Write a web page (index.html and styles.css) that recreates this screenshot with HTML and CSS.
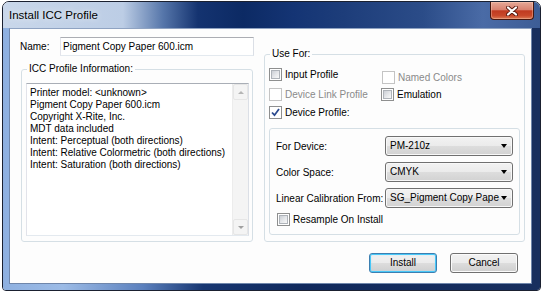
FILE: index.html
```html
<!DOCTYPE html>
<html>
<head>
<meta charset="utf-8">
<title>Install ICC Profile</title>
<link rel="stylesheet" href="styles.css">
</head>
<body>
<div class="window">
  <div class="titlebar">
    <span class="title">Install ICC Profile</span>
    <div class="close">
      <svg width="12" height="10" viewBox="0 0 12 10">
        <path d="M2 1.5 L10 8.5 M10 1.5 L2 8.5" stroke="#5a1a10" stroke-width="4" stroke-linecap="round"/>
        <path d="M2 1.5 L10 8.5 M10 1.5 L2 8.5" stroke="#ffffff" stroke-width="2.2" stroke-linecap="round"/>
      </svg>
    </div>
  </div>
  <div class="frame">
    <div class="client">
      <div class="main">
        <div class="col-left">
          <div class="name-row">
            <span class="name-label">Name:</span>
            <div class="textbox">Pigment Copy Paper 600.icm</div>
          </div>
          <fieldset class="group info-group">
            <legend>ICC Profile Information:</legend>
            <div class="listbox">
              <div class="list-text">
                <div>Printer model: &lt;unknown&gt;</div>
                <div>Pigment Copy Paper 600.icm</div>
                <div>Copyright X-Rite, Inc.</div>
                <div>MDT data included</div>
                <div>Intent: Perceptual (both directions)</div>
                <div>Intent: Relative Colormetric (both directions)</div>
                <div>Intent: Saturation (both directions)</div>
              </div>
              <div class="scrollbar">
                <div class="sb-btn"><span class="arrow-up"></span></div>
                <div class="sb-track"></div>
                <div class="sb-btn"><span class="arrow-down"></span></div>
              </div>
            </div>
          </fieldset>
        </div>
        <fieldset class="group use-group">
          <legend>Use For:</legend>
          <div class="cb-row row1">
            <div class="check col1"><span class="cb"></span><span>Input Profile</span></div>
            <div class="check col2 disabled shifted"><span class="cb"></span><span>Named Colors</span></div>
          </div>
          <div class="cb-row row2">
            <div class="check col1 disabled"><span class="cb"></span><span>Device Link Profile</span></div>
            <div class="check col2"><span class="cb"></span><span>Emulation</span></div>
          </div>
          <div class="cb-row row3">
            <div class="check col1"><span class="cb checked"><svg width="11" height="11" viewBox="0 0 11 11"><path d="M2 5.5 L4.5 8.2 L9 2" fill="none" stroke="#2b4a8f" stroke-width="1.8"/></svg></span><span>Device Profile:</span></div>
          </div>
          <div class="device-box">
            <div class="dev-row">
              <span class="dev-label">For Device:</span>
              <div class="combo"><span class="combo-text">PM-210z</span><span class="combo-arrow"></span></div>
            </div>
            <div class="dev-row">
              <span class="dev-label">Color Space:</span>
              <div class="combo"><span class="combo-text">CMYK</span><span class="combo-arrow"></span></div>
            </div>
            <div class="dev-row">
              <span class="dev-label">Linear Calibration From:</span>
              <div class="combo"><span class="combo-text">SG_Pigment Copy Pape</span><span class="combo-arrow"></span></div>
            </div>
            <div class="check resample"><span class="cb"></span><span>Resample On Install</span></div>
          </div>
        </fieldset>
      </div>
      <div class="buttons">
        <button class="btn default">Install</button>
        <button class="btn">Cancel</button>
      </div>
    </div>
  </div>
</div>
</body>
</html>
```

FILE: styles.css
```css
html, body {
  margin: 0;
  padding: 0;
}
body {
  background: #ffffff;
  font-family: "Liberation Sans", Arial, sans-serif;
  font-size: 10px;
  color: #000;
}
.window {
  margin: 1px 0 0 2px;
  width: 537px;
  height: 288px;
  border: 1px solid #1a2030;
  border-radius: 7px 7px 4px 4px;
  display: flex;
  flex-direction: column;
  overflow: hidden;
}
.titlebar {
  height: 26px;
  flex: none;
  display: flex;
  justify-content: space-between;
  align-items: flex-start;
  background: linear-gradient(90deg, #c9d7ea 0px, #bccde5 120px, #5676aa 160px, #143370 195px, #0c2a64 240px, #143474 290px, #1d3d7a 340px, #2b4c88 420px, #4a6ba6 480px, #3d5d96 537px);
}
.title {
  margin: 6px 0 0 6px;
  font-size: 11.5px;
  line-height: 14px;
  color: #000;
  text-shadow: 0 0 6px rgba(255,255,255,0.9);
}
.close {
  width: 42px;
  height: 17px;
  margin-right: 6px;
  border: 1px solid #47170f;
  border-top: none;
  border-radius: 0 0 4px 4px;
  background: linear-gradient(#e6a897 0%, #d98270 45%, #c03a20 52%, #c8482a 80%, #dc7a55 100%);
  box-shadow: inset 0 0 0 1px rgba(255,220,200,0.35);
  display: flex;
  align-items: center;
  justify-content: center;
}
.frame {
  flex: 1;
  display: flex;
  padding: 0 8px 6px 6px;
  background: linear-gradient(90deg, #8eb0e0 0px, #9cbbe6 60px, #5b80bd 140px, #173671 200px, #10295c 300px, #182f5e 537px);
}
.client {
  flex: 1;
  display: flex;
  flex-direction: column;
  background: #fdfdfd;
  border: 1px solid #6f86ab;
  border-top-color: #8fa3c2;
  padding: 8px 6px 10px 10px;
}
.main {
  flex: 1;
  display: flex;
  gap: 10px;
}
.col-left {
  width: 234px;
  display: flex;
  flex-direction: column;
}
.name-row {
  display: flex;
  align-items: center;
  height: 19px;
}
.name-label {
  width: 40px;
}
.textbox {
  box-sizing: border-box;
  width: 194px;
  height: 19px;
  border: 1px solid;
  border-color: #abadb3 #dbdfe6 #e3e9ef #e2e3ea;
  background: #fff;
  padding: 0 2px;
  line-height: 17px;
  white-space: nowrap;
}
.group {
  margin: 0;
  border: 1px solid #d5dfe5;
  border-radius: 3px;
  min-width: 0;
  display: flex;
  flex-direction: column;
}
.group legend {
  padding: 0 2px;
  margin-left: 1px;
  line-height: 12px;
  font-size: 10px;
}
.info-group {
  flex: 1;
  margin: 7px 1px 0 1px;
  padding: 8px 3px 5px 4px;
}
.listbox {
  flex: 1;
  display: flex;
  border: 1px solid;
  border-color: #a9aeb6 #dbdfe6 #e3e9ef #e2e3ea;
  background: #fff;
}
.list-text {
  flex: 1;
  padding: 3px 3px;
  line-height: 12px;
  white-space: nowrap;
}
.scrollbar {
  width: 15px;
  display: flex;
  flex-direction: column;
  background: #f4f4f4;
  border-left: 1px solid #ececec;
}
.sb-btn {
  height: 16px;
  display: flex;
  align-items: center;
  justify-content: center;
  border: 1px solid #e6e6e6;
  border-radius: 2px;
  box-sizing: border-box;
}
.sb-track {
  flex: 1;
}
.arrow-up {
  width: 0;
  height: 0;
  border-left: 3px solid transparent;
  border-right: 3px solid transparent;
  border-bottom: 3px solid #b5b5b5;
}
.arrow-down {
  width: 0;
  height: 0;
  border-left: 3px solid transparent;
  border-right: 3px solid transparent;
  border-top: 3px solid #a0a0a0;
}
.use-group {
  width: 261px;
  box-sizing: border-box;
  margin: 11px 0 0 0;
  padding: 0 4px 6px 4px;
}
.cb-row {
  display: flex;
  height: 13px;
  align-items: flex-start;
}
.row1 { margin-top: 8px; }
.row2 { margin-top: 7px; }
.row3 { margin-top: 5px; }
.check {
  display: flex;
  align-items: center;
  gap: 3px;
  height: 13px;
  white-space: nowrap;
}
.col1 {
  width: 112px;
}
.shifted {
  margin-top: 3px;
  margin-left: 1px;
}
.check.disabled {
  color: #8a8a8a;
}
.cb {
  box-sizing: border-box;
  width: 13px;
  height: 13px;
  flex: none;
  border: 1px solid #8e8f8f;
  background: #fff;
  padding: 1px;
  display: flex;
}
.cb::before {
  content: "";
  display: block;
  width: 9px;
  height: 9px;
  box-sizing: border-box;
  border: 1px solid #aeb3b9;
  background: linear-gradient(135deg, #cbcfd5 0%, #e6e8eb 55%, #f8f8f8 100%);
}
.cb.checked {
  padding: 0;
  align-items: center;
  justify-content: center;
}
.cb.checked::before {
  display: none;
}
.disabled .cb {
  border-color: #c4c4c4;
}
.disabled .cb::before {
  border-color: transparent;
  background: #fff;
}
.device-box {
  margin-top: 9px;
  border: 1px solid #d5dfe5;
  border-radius: 3px;
  padding: 7px 6px 8px 6px;
  display: flex;
  flex-direction: column;
  gap: 6px;
}
.dev-row {
  display: flex;
  align-items: center;
  height: 20px;
}
.dev-label {
  width: 109px;
  white-space: nowrap;
}
.combo {
  box-sizing: border-box;
  width: 128px;
  height: 20px;
  border: 1px solid #707070;
  border-radius: 3px;
  background: linear-gradient(#f2f2f2 0%, #ebebeb 50%, #dddddd 51%, #d2d2d2 100%);
  box-shadow: inset 0 0 0 1px #f8f8f8;
  display: flex;
  align-items: center;
}
.combo-text {
  flex: 1;
  padding-left: 4px;
  white-space: nowrap;
  line-height: 18px;
}
.combo-arrow {
  margin: 0 5px 0 2px;
  width: 0;
  height: 0;
  border-left: 3.5px solid transparent;
  border-right: 3.5px solid transparent;
  border-top: 4px solid #000;
}
.resample {
  margin-top: -1px;
  margin-left: 1px;
}
.buttons {
  display: flex;
  justify-content: flex-end;
  gap: 13px;
  margin-top: 11px;
  margin-right: 7px;
}
.btn {
  box-sizing: border-box;
  width: 68px;
  height: 20px;
  padding: 0;
  border: 1px solid #707070;
  border-radius: 3px;
  background: linear-gradient(#f2f2f2 0%, #ebebeb 50%, #dddddd 51%, #cfcfcf 100%);
  box-shadow: inset 0 0 0 1px #fbfbfb;
  font-family: "Liberation Sans", Arial, sans-serif;
  font-size: 10px;
  color: #000;
  line-height: 18px;
}
.btn.default {
  border-color: #3c7fb1;
  box-shadow: inset 0 0 0 1px #48c8f8, inset 0 0 3px #a8dcf6;
}
```
